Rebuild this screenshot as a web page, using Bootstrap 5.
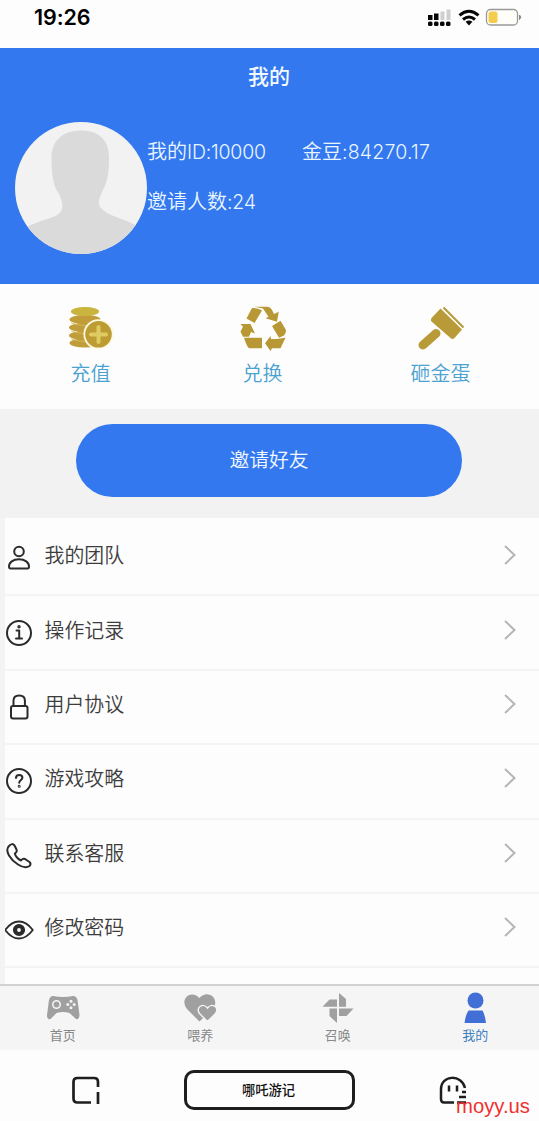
<!DOCTYPE html>
<html lang="zh-CN">
<head>
<meta charset="utf-8">
<meta name="viewport" content="width=device-width, initial-scale=1">
<title>我的</title>
<link href="https://cdn.jsdelivr.net/npm/bootstrap@5.3.0/dist/css/bootstrap.min.css" rel="stylesheet">
<style>
  body { font-family: "Liberation Sans", "Noto Sans CJK SC", sans-serif; background: #fdfdfd; color: #333; width: 539px; height: 1121px; overflow: hidden; font-size: 20px; line-height: 30px; }
  svg { display: block; flex: none; }
  .status { height: 48px; padding: 0 17px 13px 34px; }
  .clock { font: 600 21.5px/35px Inter, sans-serif; color: #000; letter-spacing: -.1px; }
  .hero { height: 236px; background: #3478f0; color: #f2faff; }
  .hero h1 { font-size: 21px; line-height: 30px; font-weight: 500; padding: 14px 1px 0 0; height: 43px; }
  .profile { padding: 31px 0 0 15px; }
  .avatar { width: 132px; height: 132px; }
  .facts { font-weight: 350; padding-top: 15px; gap: 20px; color: #e9f6ff; }
  .facts b { font: 300 19.5px/30px Inter, sans-serif; letter-spacing: -.2px; }
  .facts .amount { letter-spacing: .2px; }
  .fact-id { width: 155px; }
  .gold { width: 119px; }
  .actions { height: 125px; padding: 20px 39px 0 31px; color: #4ba1d0; }
  .actions span { font-weight: 350; line-height: 30px; margin-top: 7px; }
  .invite-area { height: 109px; background: #f2f2f3; padding: 15px 1px 0 0; }
  .invite { width: 386px; height: 73px; background: #3478f0; color: #f2faff; border: 0; font-size: 19.8px; font-weight: 350; padding-bottom: 6px; }
  .menu { height: 466px; border-left: 5px solid #f4f4f4; padding-top: 4px; overflow: hidden; }
  .menu a { height: 74.4px; border-bottom: 2px solid #f4f4f5; color: #3c3c3c; text-decoration: none; padding-right: 22.500px; font-weight: 350; font-size: 19.9px; }
  .menu svg.ico { width: 30px; height: 30px; margin-left: -1px; fill: none; stroke: #2b2b2b; stroke-width: 2; stroke-linecap: round; stroke-linejoin: round; }
  .menu span { margin: -4px auto 0 10.600px; }
  .chev { margin-top: -6px; }
  .tabs { height: 66px; background: #f5f5f5; border-top: 2px solid #d2d2d2; color: #888; font-size: 13px; line-height: 18px; }
  .tabs > div { width: 137.5px; flex: none; padding-top: 5px; }
  .tabs > div:first-child { margin-left: -6px; }
  .tabs svg { width: 36px; height: 34px; }
  .tabs span { margin-top: 2px; }
  .tabs .current { color: #3f7fc0; }
  .dock { height: 71px; padding: 20px 71px 0 71px; }
  .title-pill { width: 171px; height: 40px; border: 3px solid #1e1e1e; border-radius: 10px; color: #111; font-size: 13.3px; font-weight: 500; line-height: 35px; padding-right: 2px; }
  .watermark { right: 9px; bottom: 3px; color: #f0302f; font: 20.3px/24px "Liberation Sans", sans-serif; }
</style>
</head>
<body class="position-relative">
<header class="status d-flex align-items-center justify-content-between">
  <span class="clock">19:26</span>
  <svg width="94" height="24" viewBox="0 0 94 24">
    <g><path d="M0 9h4.500v5H0zM6 7.500h4.500V14H6z" fill="#080808"/><path d="M12.500 5.500h4V14h-4zM18.500 3.500h4V14h-4z" fill="#cfcfcf"/>
    <g fill="#080808"><rect y="15.500" width="4.500" height="4.500" rx="1.500"/><rect x="6" y="15.500" width="4.500" height="4.500" rx="1.500"/><rect x="12" y="15.500" width="4.500" height="4.500" rx="1.500"/><rect x="18" y="15.500" width="4.500" height="4.500" rx="1.500"/></g></g>
    <g fill="none" stroke="#080808" stroke-width="3"><path d="M31.500 9.300q9.500-8 19 0"/><path d="M35 13.500q6-5 12 0"/></g><path d="M37.600 15.800q3.400-2.600 6.800 0L41 19.500z" fill="#080808"/>
    <rect x="58.500" y="3.500" width="31" height="15.500" rx="4" fill="#fffef8" stroke="#999" stroke-width="1.300"/><rect x="60.500" y="5.500" width="9" height="11.500" rx="2.500" fill="#f4cd4e"/><path d="M91.500 9q2.500 2.200 0 4.500z" fill="#888" stroke="#888"/>
  </svg>
</header>
<section class="hero">
  <h1 class="text-center mb-0">我的</h1>
  <div class="profile d-flex">
    <svg class="avatar" viewBox="0 0 132 132"><defs><clipPath id="round"><circle cx="66" cy="66" r="66"/></clipPath></defs><g clip-path="url(#round)"><rect width="132" height="132" fill="#f1f2f1"/><path d="M66 8.500C46 8.500 36.500 20 36.500 36C36.500 57 39.500 65 44 72C50 85 48 91 38 95C27 99 19 101 12 105V132H122V104C114 99 105 97 94 92C84 86 81 83 87 70C92 60 94 55 94 35C94 20 86 8.500 66 8.500Z" fill="#dadada"/></g></svg>
    <div class="facts d-flex flex-column">
      <div class="d-flex"><span class="fact-id">我的<b>ID:10000</b></span><span>金豆<b class="amount">:84270.17</b></span></div>
      <div>邀请人数<b>:24</b></div>
    </div>
  </div>
</section>
<section class="actions d-flex justify-content-between">
  <div class="gold d-flex flex-column align-items-center">
    <svg width="46" height="48" viewBox="0 0 46 48"><g fill="#c09d38"><ellipse cx="17" cy="39" rx="15.500" ry="4.600"/><ellipse cx="17" cy="31.500" rx="16" ry="4.600"/><ellipse cx="17" cy="23.500" rx="16" ry="4.600"/><ellipse cx="17" cy="15.500" rx="15.500" ry="4.600"/></g><g fill="none" stroke="#d5bf62" stroke-width=".8"><path d="M3 19q14 5 28 0M3 27q14 5 28 0M3 35q14 5 28 0"/></g><ellipse cx="17" cy="7.500" rx="14" ry="4.500" fill="#c9b43e"/><circle cx="30.500" cy="30.300" r="14.200" fill="#bd9c34" stroke="#fff9e2" stroke-width="1.800"/><path d="M30.500 23v15M23 30.500h15" stroke="#e0cb62" stroke-width="4" stroke-linecap="round"/></svg>
    <span>充值</span>
  </div>
  <div class="gold d-flex flex-column align-items-center" style="margin-left:-6px">
    <svg width="48" height="48" viewBox="0 0 48 48" fill="#b89835"><path d="M13 4Q18 3.500 23 6.500L15.500 19 7.500 14.500z"/><path d="M15.500 2.700H28Q31 2.700 33 6L35 10 39.800 7.700 38 17.700 26.500 14.300 29.500 12.700 24 4.500z"/><path d="M33 22L41.500 16.700 47 26Q47 30 45 31.500L40 33.700z"/><path d="M46.500 33.700L41.500 44.300H33L31.500 47 26 39.300 31.500 32 32 35H38z"/><path d="M5 33.700H23V44.300H10Q8 43 5 33.700z"/><path d="M1.500 20L11.500 20 16 29.500 12 28 10 32.700H4L1.500 27.500 4 22.700z"/></svg>
    <span>兑换</span>
  </div>
  <div class="gold d-flex flex-column align-items-center">
    <svg width="48" height="48" viewBox="0 0 48 48" fill="#b89b38"><path d="M23.500 4.500L45 25.500 37.500 34Q35.500 36 33.500 34L14.500 17.500Q13 16 14.500 14z"/><path d="M26.500 3.500L46.500 23.500" stroke="#b89b38" stroke-width="2.200"/><path d="M6 41L19 29.500" stroke="#b89b38" stroke-width="9" stroke-linecap="round"/></svg>
    <span>砸金蛋</span>
  </div>
</section>
<section class="invite-area text-center"><button class="btn invite rounded-pill">邀请好友</button></section>
<nav class="menu">
  <a href="#" class="d-flex align-items-center"><svg class="ico" viewBox="0 0 30 30"><circle cx="15" cy="8.500" r="4.800"/><path d="M6.500 25.500q-1.500 0-1.500-2c0-4 4-7.200 10-7.200s10 3.200 10 7.200q0 2-1.500 2z"/></svg><span>我的团队</span><svg class="chev" width="14" height="22"><path d="M2 2l9.500 9L2 20" fill="none" stroke="#b5b5b5" stroke-width="2"/></svg></a>
  <a href="#" class="d-flex align-items-center"><svg class="ico" viewBox="0 0 30 30"><circle cx="15" cy="15" r="12"/><path d="M12.500 12.500h2.700v8m-3.200 0h6"/><circle cx="15" cy="8.800" r=".7"/></svg><span>操作记录</span><svg class="chev" width="14" height="22"><path d="M2 2l9.500 9L2 20" fill="none" stroke="#b5b5b5" stroke-width="2"/></svg></a>
  <a href="#" class="d-flex align-items-center"><svg class="ico" viewBox="0 0 30 30"><rect x="7" y="14" width="16.500" height="12.500" rx="2"/><path d="M9.500 14V8.500q0-5 5.700-5t5.700 5V14"/></svg><span>用户协议</span><svg class="chev" width="14" height="22"><path d="M2 2l9.500 9L2 20" fill="none" stroke="#b5b5b5" stroke-width="2"/></svg></a>
  <a href="#" class="d-flex align-items-center"><svg class="ico" viewBox="0 0 30 30"><circle cx="15" cy="15" r="12"/><path d="M12 12q0-3 3.200-3t3.200 2.700c0 2-3.200 2.500-3.200 5"/><circle cx="15.200" cy="20.300" r=".5"/></svg><span>游戏攻略</span><svg class="chev" width="14" height="22"><path d="M2 2l9.500 9L2 20" fill="none" stroke="#b5b5b5" stroke-width="2"/></svg></a>
  <a href="#" class="d-flex align-items-center"><svg class="ico" viewBox="0 0 30 30"><path d="M5 5Q8 1.500 10.500 4.500L12.500 8.500Q13.500 11 10.800 12.500Q12 17 17 19.500Q19 17 21 18L25.500 21Q27.500 23 25.500 25Q21 28 14 23.500C7 19 0 10 5 5Z"/></svg><span>联系客服</span><svg class="chev" width="14" height="22"><path d="M2 2l9.500 9L2 20" fill="none" stroke="#b5b5b5" stroke-width="2"/></svg></a>
  <a href="#" class="d-flex align-items-center"><svg class="ico" viewBox="0 0 30 30"><path d="M1.200 15Q7.500 6.500 15 6.500T28.800 15Q22.500 23.500 15 23.500T1.200 15Z" stroke-width="1.800"/><circle cx="15" cy="15" r="4" stroke-width="4.200"/></svg><span>修改密码</span><svg class="chev" width="14" height="22"><path d="M2 2l9.500 9L2 20" fill="none" stroke="#b5b5b5" stroke-width="2"/></svg></a>
</nav>
<nav class="tabs d-flex">
  <div class="d-flex flex-column align-items-center"><svg viewBox="0 0 36 34" fill="#a0a0a0"><path d="M8 5Q13 6 18 6T28 5Q31.500 5 32.500 9L34.500 24Q34 29 31 28L24.500 22Q18 20 11.500 22L5.500 28Q2 29 2 24L4 9Q5 5 8 5Z"/><circle cx="11.500" cy="13.500" r="3.700" stroke="#f5f5f5" stroke-width="1.600"/><g fill="#f5f5f5"><circle cx="26" cy="10.300" r="1.500"/><circle cx="26" cy="16.700" r="1.500"/><circle cx="22.800" cy="13.500" r="1.500"/><circle cx="29.200" cy="13.500" r="1.500"/></g></svg><span>首页</span></div>
  <div class="d-flex flex-column align-items-center"><svg viewBox="0 0 36 34" fill="#a0a0a0"><path d="M17.500 30.500L5 18C-3 8 9-2 17.500 7C25-2 38 7 31.500 17Z"/><path d="M25.500 30.500L17.500 22.500C13 16 21.500 11.500 25.500 17C29.500 11.500 38 16 33.500 22.500Z" stroke="#f5f5f5" stroke-width="1.400"/></svg><span>喂养</span></div>
  <div class="d-flex flex-column align-items-center"><svg viewBox="0 0 36 34" fill="#a0a0a0"><path d="M19 2L26 8V15.800H19zM19 17.600H33.500L26.500 25H19zM17 17.600V32L9.500 25V17.600zM2.500 15.800L9.500 8.500H17V15.800z"/></svg><span>召唤</span></div>
  <div class="current d-flex flex-column align-items-center"><svg viewBox="0 0 36 34" fill="#426fd6"><circle cx="18.500" cy="9.500" r="8"/><path d="M11.500 19.500H25.500Q28 24 29 32H7.500Q8.500 24 11.500 19.500Z"/></svg><span>我的</span></div>
</nav>
<footer class="dock d-flex align-items-start justify-content-between">
  <svg width="30" height="40" viewBox="0 0 30 40" fill="none" stroke="#1e1e1e" stroke-width="2.700"><path d="M20 32.500H6.500Q2.500 32.500 2.500 28.500V12Q2.500 8 6.500 8H23Q27 8 27 12V17M27 22V34"/></svg>
  <div class="title-pill text-center">哪吒游记</div>
  <svg width="30" height="40" viewBox="0 0 30 40" fill="none" stroke="#1e1e1e" stroke-width="2.500"><path d="M16 32.500H6Q3 32.500 3 29V19.500C3 4.500 24 4 27 18M11 15.500v6M19 15.500v6M24 22h4M21 27h7M19 32.500h9"/></svg>
</footer>
<div class="watermark position-absolute">moyy.us</div>
<script src="https://cdn.jsdelivr.net/npm/bootstrap@5.3.0/dist/js/bootstrap.bundle.min.js"></script>
</body>
</html>
